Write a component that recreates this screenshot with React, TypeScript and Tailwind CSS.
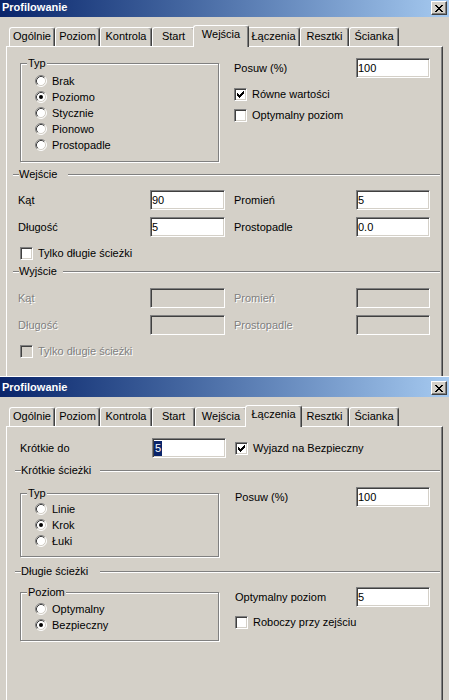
import React from "react";

type Tab = { label: string; w: string; ws: string };

const TABS: Tab[] = [
  { label: "Ogólnie", w: "w-[46px]", ws: "w-[50px]" },
  { label: "Poziom", w: "w-[45px]", ws: "w-[49px]" },
  { label: "Kontrola", w: "w-[52px]", ws: "w-[56px]" },
  { label: "Start", w: "w-[43px]", ws: "w-[47px]" },
  { label: "Wejścia", w: "w-[52px]", ws: "w-[56px]" },
  { label: "Łączenia", w: "w-[53px]", ws: "w-[57px]" },
  { label: "Resztki", w: "w-[49px]", ws: "w-[53px]" },
  { label: "Ścianka", w: "w-[50px]", ws: "w-[54px]" },
];

// classic 3d sunken edge (text fields, check boxes)
const sunken =
  "border border-t-[#808080] border-l-[#808080] border-b-white border-r-white shadow-[inset_1px_1px_0_#404040,inset_-1px_-1px_0_#d4d0c8]";
const dis = "text-[#808080] [text-shadow:1px_1px_0_#fff]";
const panel =
  "ml-[6px] w-[437px] flex-1 border-l border-t border-r border-l-white border-t-white border-r-[#404040] shadow-[inset_-1px_0_0_#808080]";

const CloseButton = () => (
  <div className="mt-[4px] flex h-[14px] w-[16px] items-center justify-center border border-t-white border-l-white border-b-[#404040] border-r-[#404040] bg-[#d4d0c8] shadow-[inset_-1px_-1px_0_#808080]">
    <svg width="8" height="7" viewBox="0 0 8 7" shapeRendering="crispEdges">
      <path
        fill="#000"
        d="M0 0h2v1h-2z M6 0h2v1h-2z M1 1h2v1h-2z M5 1h2v1h-2z M2 2h4v1h-4z M3 3h2v1h-2z M2 4h4v1h-4z M1 5h2v1h-2z M5 5h2v1h-2z M0 6h2v1h-2z M6 6h2v1h-2z"
      />
    </svg>
  </div>
);

const TitleBar = () => (
  <div className="flex h-[20px] items-start justify-between bg-linear-to-r from-[#0a246a] to-[#a6caf0] pl-[2px] pr-[2px]">
    <span className="pt-[4px] text-[11px] font-bold leading-[13px] text-white">Profilowanie</span>
    <CloseButton />
  </div>
);

const TabRow = ({ active }: { active: number }) => (
  <div className="flex shrink-0 items-end pl-[9px] pt-[8px]">
    {TABS.map((t, i) => {
      const sel = i === active;
      return (
        <div
          key={t.label}
          className={`relative shrink-0 whitespace-nowrap rounded-t-[3px] border-l border-t border-r border-l-white border-t-white border-r-[#404040] bg-[#d4d0c8] pt-[2px] text-center shadow-[inset_-1px_0_0_#808080] ${
            sel ? `z-10 -mx-[2px] -mb-px h-[22px] ${t.ws}` : `h-[19px] ${t.w}`
          }`}
        >
          {t.label}
        </div>
      );
    })}
  </div>
);

const Radio = ({ label, checked }: { label: string; checked?: boolean }) => (
  <div className="flex h-[16px] items-center gap-[5px] pl-[14px]">
    <svg width="12" height="12" viewBox="0 0 12 12" className="shrink-0">
      <circle cx="6" cy="6" r="5" fill="#fff" />
      <path d="M2.11 9.89A5.5 5.5 0 0 1 9.89 2.11" fill="none" stroke="#808080" />
      <path d="M9.89 2.11A5.5 5.5 0 0 1 2.11 9.89" fill="none" stroke="#fff" />
      <path d="M2.82 9.18A4.5 4.5 0 0 1 9.18 2.82" fill="none" stroke="#404040" />
      <path d="M9.18 2.82A4.5 4.5 0 0 1 2.82 9.18" fill="none" stroke="#d4d0c8" />
      {checked && <circle cx="6" cy="6" r="2" fill="#000" />}
    </svg>
    <span className="whitespace-nowrap">{label}</span>
  </div>
);

const Check = ({ label, checked, disabled }: { label: string; checked?: boolean; disabled?: boolean }) => (
  <div className="flex h-[16px] items-center gap-[5px]">
    <div
      className={`flex h-[13px] w-[13px] shrink-0 items-center justify-center ${sunken} ${
        disabled ? "bg-[#d4d0c8]" : "bg-white"
      }`}
    >
      {checked && (
        <svg width="7" height="7" viewBox="0 0 7 7" shapeRendering="crispEdges">
          <path
            fill="#000"
            d="M6 0h1v1h-1z M5 1h2v1h-2z M0 2h1v1h-1z M4 2h3v1h-3z M0 3h2v1h-2z M3 3h3v1h-3z M0 4h5v1h-5z M1 5h3v1h-3z M2 6h1v1h-1z"
          />
        </svg>
      )}
    </div>
    <span className={`whitespace-nowrap ${disabled ? dis : ""}`}>{label}</span>
  </div>
);

const Field = ({
  value,
  w,
  disabled,
  selected,
}: {
  value?: string;
  w: string;
  disabled?: boolean;
  selected?: boolean;
}) => (
  <div
    className={`flex h-[20px] shrink-0 items-center pl-[1px] ${w} ${sunken} ${
      disabled ? "bg-[#d4d0c8]" : "bg-white"
    }`}
  >
    {selected ? (
      <span className="bg-[#0a246a] px-[1px] leading-[15px] text-white">{value}</span>
    ) : (
      value
    )}
  </div>
);

const GroupBox = ({
  title,
  className,
  body,
  children,
}: {
  title: string;
  className: string;
  body: string;
  children: React.ReactNode;
}) => (
  <fieldset
    className={`shrink-0 border border-[#808080] shadow-[1px_1px_0_#fff,inset_1px_1px_0_#fff] ${className}`}
  >
    <legend className="ml-[6px] bg-[#d4d0c8] px-[1px] leading-[13px]">{title}</legend>
    <div className={body}>{children}</div>
  </fieldset>
);

const Header = ({ title, className, labelW }: { title: string; className: string; labelW: string }) => (
  <div className={`flex h-[13px] items-center ${className}`}>
    <div className="h-[2px] w-[6px] border-t border-b border-t-[#808080] border-b-white" />
    <span className={`whitespace-nowrap ${labelW}`}>{title}</span>
    <div className="h-[2px] flex-1 border-t border-b border-t-[#808080] border-b-white" />
  </div>
);

export default function App() {
  return (
    <div className="flex h-[700px] w-full flex-col overflow-hidden bg-[#d4d0c8] font-['Liberation_Sans',Arial,sans-serif] text-[11px] leading-[13px] text-black">
      {/* Wejścia page */}
      <div className="flex h-[376px] shrink-0 flex-col overflow-hidden">
        <div className="h-[17px] shrink-0 overflow-hidden">
          <div className="-mt-[3px]">
            <TitleBar />
          </div>
        </div>
        <TabRow active={4} />
        <div className={panel}>
          <div className="mt-[10px] flex">
            <GroupBox title="Typ" className="ml-[13px] w-[199px]" body="pt-[3px] pb-[8px]">
              <Radio label="Brak" />
              <Radio label="Poziomo" checked />
              <Radio label="Stycznie" />
              <Radio label="Pionowo" />
              <Radio label="Prostopadle" />
            </GroupBox>
            <div className="ml-[15px] mt-[1px] flex flex-col">
              <div className="flex h-[20px] items-center">
                <span className="w-[122px]">Posuw (%)</span>
                <Field value="100" w="w-[74px]" />
              </div>
              <div className="mt-[8px]">
                <Check label="Równe wartości" checked />
              </div>
              <div className="mt-[5px]">
                <Check label="Optymalny poziom" />
              </div>
            </div>
          </div>

          <Header title="Wejście" className="ml-[6px] mr-[2px] mt-[6px]" labelW="w-[49px]" />
          <div className="mt-[9px] flex h-[20px] items-center">
            <span className="ml-[11px] w-[132px]">Kąt</span>
            <Field value="90" w="w-[75px]" />
            <span className="ml-[9px] w-[122px]">Promień</span>
            <Field value="5" w="w-[74px]" />
          </div>
          <div className="mt-[7px] flex h-[20px] items-center">
            <span className="ml-[11px] w-[132px]">Długość</span>
            <Field value="5" w="w-[75px]" />
            <span className="ml-[9px] w-[122px]">Prostopadle</span>
            <Field value="0.0" w="w-[74px]" />
          </div>
          <div className="ml-[13px] mt-[8px]">
            <Check label="Tylko długie ścieżki" />
          </div>

          <Header title="Wyjście" className="ml-[6px] mr-[2px] mt-[4px]" labelW="w-[44px]" />
          <div className="mt-[10px] flex h-[20px] items-center">
            <span className={`ml-[11px] w-[132px] ${dis}`}>Kąt</span>
            <Field w="w-[75px]" disabled />
            <span className={`ml-[9px] w-[122px] ${dis}`}>Promień</span>
            <Field w="w-[74px]" disabled />
          </div>
          <div className="mt-[7px] flex h-[20px] items-center">
            <span className={`ml-[11px] w-[132px] ${dis}`}>Długość</span>
            <Field w="w-[75px]" disabled />
            <span className={`ml-[9px] w-[122px] ${dis}`}>Prostopadle</span>
            <Field w="w-[74px]" disabled />
          </div>
          <div className="ml-[13px] mt-[8px]">
            <Check label="Tylko długie ścieżki" disabled />
          </div>
        </div>
      </div>

      {/* Łączenia page */}
      <div className="flex flex-1 flex-col border-t border-white">
        <TitleBar />
        <TabRow active={5} />
        <div className={panel}>
          <div className="mt-[11px] flex h-[20px] items-center">
            <span className="ml-[13px] w-[132px]">Krótkie do</span>
            <Field value="5" w="w-[74px]" selected />
            <div className="ml-[9px]">
              <Check label="Wyjazd na Bezpieczny" checked />
            </div>
          </div>

          <Header title="Krótkie ścieżki" className="ml-[8px] mr-[2px] mt-[6px]" labelW="w-[79px]" />
          <div className="mt-[10px] flex">
            <GroupBox title="Typ" className="ml-[13px] w-[199px]" body="pt-[1px] pb-[7px]">
              <Radio label="Linie" />
              <Radio label="Krok" checked />
              <Radio label="Łuki" />
            </GroupBox>
            <div className="ml-[16px] flex flex-col">
              <div className="flex h-[20px] items-center">
                <span className="w-[121px]">Posuw (%)</span>
                <Field value="100" w="w-[74px]" />
              </div>
            </div>
          </div>

          <Header title="Długie ścieżki" className="ml-[8px] mr-[2px] mt-[8px]" labelW="w-[79px]" />
          <div className="mt-[8px] flex">
            <GroupBox title="Poziom" className="ml-[13px] w-[199px]" body="pt-[2px] pb-[7px]">
              <Radio label="Optymalny" />
              <Radio label="Bezpieczny" checked />
            </GroupBox>
            <div className="ml-[16px] mt-[1px] flex flex-col">
              <div className="flex h-[20px] items-center">
                <span className="w-[121px]">Optymalny poziom</span>
                <Field value="5" w="w-[74px]" />
              </div>
              <div className="mt-[7px]">
                <Check label="Roboczy przy zejściu" />
              </div>
            </div>
          </div>
        </div>
      </div>
    </div>
  );
}
